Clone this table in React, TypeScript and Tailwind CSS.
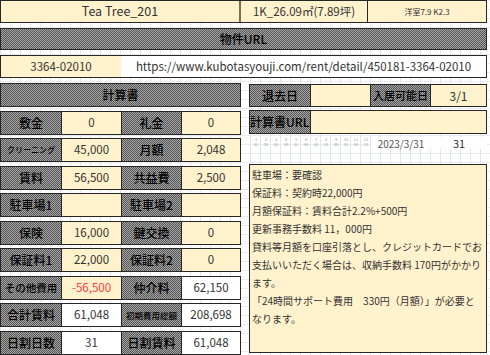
const hatch =
  "bg-[image:repeating-conic-gradient(#555555_0%_25%,#a6a6a6_0%_50%)] bg-[length:2px_2px]";

type Row = {
  l1: string;
  v1: string;
  l2: string;
  v2: string;
  s1?: string;
  s2?: string;
  w1?: boolean;
  w2?: boolean;
  red?: boolean;
};

const ROWS: Row[] = [
  { l1: "敷金", v1: "0", l2: "礼金", v2: "0" },
  { l1: "クリーニング", v1: "45,000", l2: "月額", v2: "2,048", s1: "text-[8px]" },
  { l1: "賃料", v1: "56,500", l2: "共益費", v2: "2,500" },
  { l1: "駐車場1", v1: "", l2: "駐車場2", v2: "" },
  { l1: "保険", v1: "16,000", l2: "鍵交換", v2: "0" },
  { l1: "保証料1", v1: "22,000", l2: "保証料2", v2: "0" },
  { l1: "その他費用", v1: "-56,500", l2: "仲介料", v2: "62,150", s1: "text-[10.5px]", red: true, w2: true },
  { l1: "合計賃料", v1: "61,048", l2: "初期費用総額", v2: "208,698", s2: "text-[8.5px]", w1: true, w2: true },
  { l1: "日割日数", v1: "31", l2: "日割賃料", v2: "61,048", w1: true, w2: true },
];

const NOTES = [
  "駐車場：要確認",
  "保証料：契約時22,000円",
  "月額保証料：賃料合計2.2%+500円",
  "更新事務手数料 11，000円",
  "貸料等月額を口座引落とし、クレジットカードでお",
  "支払いいただく場合は、収納手数料 170円がかかり",
  "ます。",
  "「24時間サポート費用　330円（月額）」が必要と",
  "なります。",
];

const DAYS = ["31", "28", "31", "30", "31", "30", "31", "31", "30", "31", "30", "31"];

function CalcRow({ row }: { row: Row }) {
  return (
    <div className="flex h-[24px] border border-[#262626] text-[12px]">
      <div className={`${hatch} flex w-[60px] items-center justify-center whitespace-nowrap font-medium text-black ${row.s1 ?? ""}`}>
        {row.l1}
      </div>
      <div
        className={`flex w-[60px] items-center justify-center border-l border-[#262626] text-[11.5px] ${
          row.w1 ? "bg-white" : "bg-[#fff2cc]"
        } ${row.red ? "text-[#ff3b3b]" : "text-[#333]"}`}
      >
        {row.v1}
      </div>
      <div className={`${hatch} flex w-[60px] items-center justify-center whitespace-nowrap border-l border-[#262626] font-medium text-black ${row.s2 ?? ""}`}>
        {row.l2}
      </div>
      <div
        className={`flex flex-1 items-center justify-center border-l border-[#262626] text-[11.5px] text-[#333] ${
          row.w2 ? "bg-white" : "bg-[#fff2cc]"
        }`}
      >
        {row.v2}
      </div>
    </div>
  );
}

export default function App() {
  return (
    <div className="h-[355px] w-[490px] overflow-hidden bg-white bg-[image:linear-gradient(to_right,#e3e5ec_1px,transparent_1px),linear-gradient(to_bottom,#e8eaef_1px,transparent_1px)] bg-[length:10px_10px,10px_9px] font-['Noto_Sans_CJK_JP','Open_Sans',sans-serif] text-[#333]">
      <div className="flex w-[487px] flex-col">
        <div className="flex h-[23px] border border-[#262626] bg-[#fff2cc] text-[12.5px]">
          <div className="flex w-[240px] items-center justify-center border-r-2 border-[#7d6e55]">Tea Tree_201</div>
          <div className="flex w-[127px] items-center justify-center border-r border-[#262626] text-[11.5px]">1K_26.09㎡(7.89坪)</div>
          <div className="flex flex-1 items-center justify-center text-[8px]">洋室7.9 K2.3</div>
        </div>

        <div className={`${hatch} mt-[5px] flex h-[22px] items-center justify-center border border-[#262626] text-[12px] font-medium text-black`}>
          物件URL
        </div>

        <div className="mt-[5px] flex h-[23px] border border-[#262626] text-[12px]">
          <div className="flex w-[120px] items-center justify-center bg-[#fff2cc] text-[11.5px]">3364-02010</div>
          <div className="flex flex-1 items-center justify-center whitespace-nowrap bg-white text-[11.5px]">
            https://www.kubotasyouji.com/rent/detail/450181-3364-02010
          </div>
        </div>

        <div className="mt-[5px] flex gap-[8px]">
          <div className="flex w-[241px] flex-col gap-[3.5px]">
            <div className={`${hatch} flex h-[24px] items-center justify-center border border-[#262626] text-[12px] font-medium text-black`}>
              計算書
            </div>
            {ROWS.map((row) => (
              <CalcRow key={row.l1} row={row} />
            ))}
          </div>

          <div className="flex flex-1 flex-col">
            <div className="mt-[1px] flex h-[23px] border border-[#262626] text-[12px]">
              <div className={`${hatch} flex w-[60px] items-center justify-center font-medium text-black`}>退去日</div>
              <div className="w-[60px] border-l border-[#262626] bg-[#fff2cc]" />
              <div className={`${hatch} flex w-[60px] items-center justify-center whitespace-nowrap border-l border-[#262626] text-[11px] font-medium text-black`}>
                入居可能日
              </div>
              <div className="flex flex-1 items-center justify-center border-l border-[#262626] bg-[#fff2cc]">3/1</div>
            </div>

            <div className="mt-[3px] flex h-[24px] border border-[#262626] text-[12px]">
              <div className={`${hatch} flex w-[60px] items-center whitespace-nowrap font-medium text-black`}>計算書URL</div>
              <div className="flex-1 border-l border-[#262626] bg-[#fff2cc]" />
            </div>

            <div className="flex h-[30px] items-start pt-[3px]">
              <div className="flex w-[122px] pl-[2px]">
                {DAYS.map((d, i) => (
                  <div key={i} className="flex w-[10px] flex-col items-center text-[4px] leading-[5px] text-[#999]">
                    <span>{i + 1}</span>
                    <span>{d}</span>
                  </div>
                ))}
              </div>
              <div className="flex h-[12px] w-[60px] items-center justify-center bg-white text-[10px] text-[#555]">2023/3/31</div>
              <div className="flex h-[12px] flex-1 items-center justify-center bg-white text-[11px]">31</div>
            </div>

            <div className="flex h-[189px] flex-col border border-[#262626] bg-[#fff2cc] px-[2px] pt-[1px] text-[10px] leading-[18px] text-[#333]">
              {NOTES.map((n) => (
                <div key={n} className="whitespace-nowrap">
                  {n}
                </div>
              ))}
            </div>
          </div>
        </div>
      </div>
    </div>
  );
}
